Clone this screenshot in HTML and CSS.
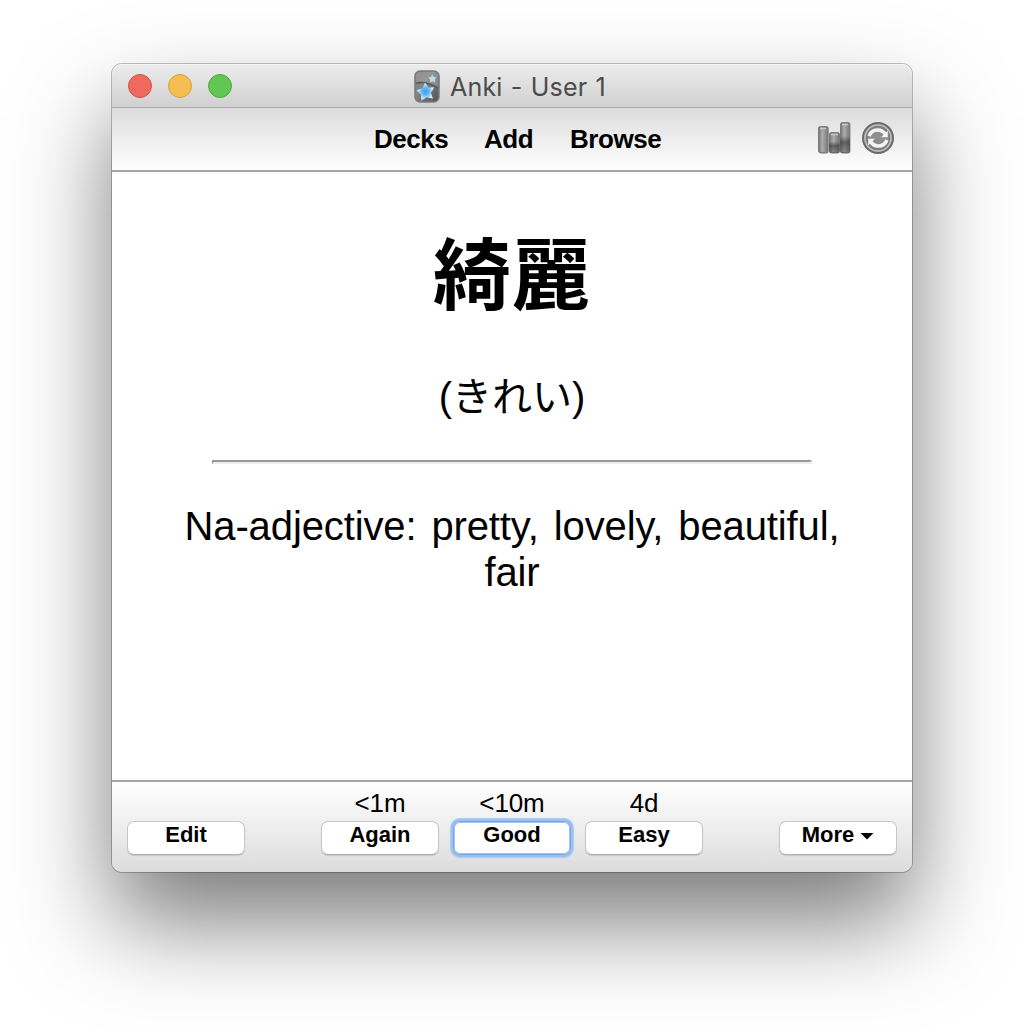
FILE: index.html
```html
<!DOCTYPE html>
<html lang="en">
<head>
<meta charset="utf-8">
<title>Anki - User 1</title>
<link rel="stylesheet" href="styles.css">
</head>
<body>
<div class="window">
  <header class="titlebar">
    <div class="lights"><span class="light red"></span><span class="light yellow"></span><span class="light green"></span></div>
    <div class="title">
      <svg class="app-icon" width="26" height="33" viewBox="0 0 26 33">
        <defs>
          <linearGradient id="card" x1="0" y1="0" x2="1" y2="1"><stop offset="0" stop-color="#777"/><stop offset=".35" stop-color="#858585"/><stop offset=".36" stop-color="#888"/><stop offset="1" stop-color="#505050"/></linearGradient>
          <radialGradient id="star"><stop offset="0" stop-color="#3ba0ed"/><stop offset=".4" stop-color="#62b6f2"/><stop offset=".8" stop-color="#c9e6f7"/></radialGradient>
          <filter id="soft" x="-10%" y="-10%" width="120%" height="120%"><feGaussianBlur stdDeviation=".45"/></filter>
        </defs>
        <g filter="url(#soft)">
          <rect x="1" y="1" width="24" height="31" rx="5" fill="url(#card)" stroke="#7c7c7c" stroke-width="1.6"/>
          <path d="M2 13Q13 11 24 18V6Q24 2 20 2H6Q2 2 2 6z" fill="#aaa" opacity=".45"/>
          <path d="M2 13Q13 11 24 18" fill="none" stroke="#484848" stroke-width="1.6" opacity=".75"/>
          <path d="M11 12.500l3.400 5 6-.2-3.400 5.400 2 6-6.200-1.500-5.400 3.300-.5-6.100-4.400-4.200 6-2z" fill="url(#star)"/>
          <path d="M18.500 4.500l1.200 2.400 2.800.4-1.700 2.300.5 2.800-2.700-1.100-2.600 1.100.2-2.800-2-2 2.800-.6z" fill="#b4def4"/>
        </g>
      </svg>
      <span class="title-text">Anki - User 1</span>
    </div>
  </header>
  <nav class="toolbar">
    <div class="links"><span class="decks">Decks</span><span class="add">Add</span><span class="browse">Browse</span></div>
    <div class="tools">
      <svg width="34" height="34" viewBox="0 0 34 34">
        <defs>
          <linearGradient id="bar"><stop offset="0" stop-color="#7c7c7c"/><stop offset=".4" stop-color="#adadad"/><stop offset="1" stop-color="#757575"/></linearGradient>
          <linearGradient id="shade" x1="0" y1="0" x2="0" y2="1"><stop offset=".45" stop-color="#333" stop-opacity="0"/><stop offset=".65" stop-color="#333" stop-opacity=".6"/><stop offset="1" stop-color="#444" stop-opacity=".3"/></linearGradient>
        </defs>
        <g filter="url(#soft)">
          <g stroke="#7b7b7b" stroke-width="1.4">
            <rect x="1.700" y="5.700" width="9.300" height="26" rx="2" fill="url(#bar)"/>
            <rect x="12.700" y="11.700" width="9.600" height="20" rx="2" fill="url(#bar)"/>
            <rect x="23.700" y="1.700" width="9" height="30" rx="2" fill="url(#bar)"/>
          </g>
          <rect x="12" y="11" width="10.500" height="21" rx="2" fill="url(#shade)"/>
          <rect x="23" y="1" width="10" height="31" rx="2" fill="url(#shade)"/>
          <path d="M3 7.500h6M14 13.500h7M25 3.500h6" stroke="#c8c8c8" stroke-width="1.5"/>
        </g>
      </svg>
      <svg width="34" height="34" viewBox="0 0 34 34">
        <g filter="url(#soft)">
          <circle cx="17" cy="17" r="15" fill="#8e8e8e" stroke="#6b6b6b" stroke-width="2"/>
          <circle cx="17" cy="17" r="13" fill="none" stroke="#bdbdbd" stroke-width="1.600"/>
          <circle cx="17" cy="17" r="11.300" fill="#8e8e8e" stroke="#7a7a7a" stroke-width="1.400"/>
          <g fill="none" stroke="#f4f4f4" stroke-width="3.600"><path d="M8 15Q10.500 9 16.500 9Q21.500 9 24 13"/><path d="M26 19Q23.500 25 17.500 25Q12.500 25 10 21"/></g>
          <path d="M26.800 9.500V16.200H20zM7.200 24.500V17.800H14z" fill="#f4f4f4"/>
        </g>
      </svg>
    </div>
  </nav>
  <main class="card">
    <div class="kanji" lang="ja">綺麗</div>
    <div class="reading" lang="ja">(きれい)</div>
    <div class="rule"></div>
    <div class="meaning">Na-adjective: pretty, lovely, beautiful, fair</div>
  </main>
  <footer class="bottom">
    <button class="btn edit">Edit</button>
    <div class="answers">
      <div class="answer"><span class="due">&lt;1m</span><button class="btn">Again</button></div>
      <div class="answer"><span class="due">&lt;10m</span><button class="btn focused">Good</button></div>
      <div class="answer"><span class="due">4d</span><button class="btn">Easy</button></div>
    </div>
    <button class="btn more">More<svg width="14" height="8" viewBox="0 0 14 8"><path d="M.5 1h13L7 7.500z"/></svg></button>
  </footer>
</div>
</body>
</html>
```
FILE: styles.css
```css
* { box-sizing: border-box; }
html, body { height: 100%; }
body {
  margin: 0;
  padding-top: 64px;
  overflow: hidden;
  background: #fff;
  color: #000;
  font-family: "Liberation Sans", "Noto Sans CJK JP", sans-serif;
}
.window {
  width: 800px;
  height: 808px;
  margin: 0 auto;
  display: flex;
  flex-direction: column;
  border-radius: 10px;
  background: #fff;
  box-shadow: 0 0 0 1px rgba(0,0,0,.24), 0 50px 96px rgba(0,0,0,.52);
}
.titlebar {
  height: 44px;
  flex: none;
  display: grid;
  grid-template-columns: 302px 1fr;
  align-items: center;
  border-radius: 10px 10px 0 0;
  border-bottom: 1px solid #acacac;
  background: linear-gradient(#ececec, #d1d1d1);
  box-shadow: inset 0 1px #f6f6f6;
}
.lights { display: flex; gap: 16px; padding-left: 16px; }
.light { width: 24px; height: 24px; border-radius: 50%; border: 1px solid; }
.red { background: #ee6a5f; border-color: #d45149; }
.yellow { background: #f6be50; border-color: #d9a040; }
.green { background: #62c655; border-color: #50a73f; }
.title { display: flex; align-items: center; gap: 10px; padding-top: 1px; }
.app-icon { flex: none; }
.title-text {
  padding-top: 1px;
  font: 25px/32px Inter, sans-serif;
  letter-spacing: .2px;
  word-spacing: 1px;
  color: #4b4b4b;
  white-space: nowrap;
}
.toolbar {
  height: 64px;
  flex: none;
  display: grid;
  grid-template-columns: 1fr auto;
  padding: 0 17px 0 262px;
  border-bottom: 2px solid #a5a5a5;
  background: linear-gradient(#dcdcdc, #fff);
}
.links {
  display: flex;
  padding-top: 15px;
  font-size: 26px;
  line-height: 32px;
  font-weight: bold;
  letter-spacing: -.45px;
}
.decks { width: 110px; }
.add { width: 86px; }
.tools { display: flex; gap: 10px; padding-top: 13px; }
.card { height: 608px; flex: none; text-align: center; }
.kanji {
  padding-top: 40px;
  height: 198px;
  font: bold 78px/116px "Noto Sans CJK JP", sans-serif;
  letter-spacing: 1px;
}
.reading { height: 90px; font-size: 40px; line-height: 54px; }
.rule {
  width: 600px;
  height: 4px;
  margin: 0 auto 39px;
  border: 2px solid;
  border-color: #9a9a9a #eee #eee #9a9a9a;
}
.meaning {
  padding: 0 60px;
  font-size: 40px;
  line-height: 46px;
  letter-spacing: -.12px;
  word-spacing: 4px;
}
.bottom {
  flex: 1;
  display: grid;
  grid-template-columns: 118px 1fr 118px;
  padding: 0 15px;
  border-top: 2px solid #a5a5a5;
  border-radius: 0 0 10px 10px;
  background: linear-gradient(#fff, #dcdcdc);
}
.edit, .more { margin-top: 39px; }
.answers { display: flex; gap: 14px; padding-left: 76px; }
.answer { width: 118px; display: flex; flex-direction: column; align-items: center; }
.due { height: 39px; padding-top: 6px; font-size: 26px; line-height: 30px; letter-spacing: -.1px; }
.btn {
  display: flex;
  justify-content: center;
  align-items: flex-start;
  gap: 6px;
  width: 118px;
  height: 34px;
  padding: 0;
  border: 1px solid #c8c8c8;
  border-bottom-color: #b0b0b0;
  border-radius: 7px;
  background: #fff;
  box-shadow: 0 1px 1px rgba(0,0,0,.12);
  color: #000;
  font: bold 22px/26px "Liberation Sans", sans-serif;
}
.btn svg { margin-top: 10px; }
.focused { border-color: #7aa5de; box-shadow: inset 0 0 0 1px #a3c3ee, 0 0 0 2px #9cc0f1, 0 0 1px 3px #aacaf3; }
```
